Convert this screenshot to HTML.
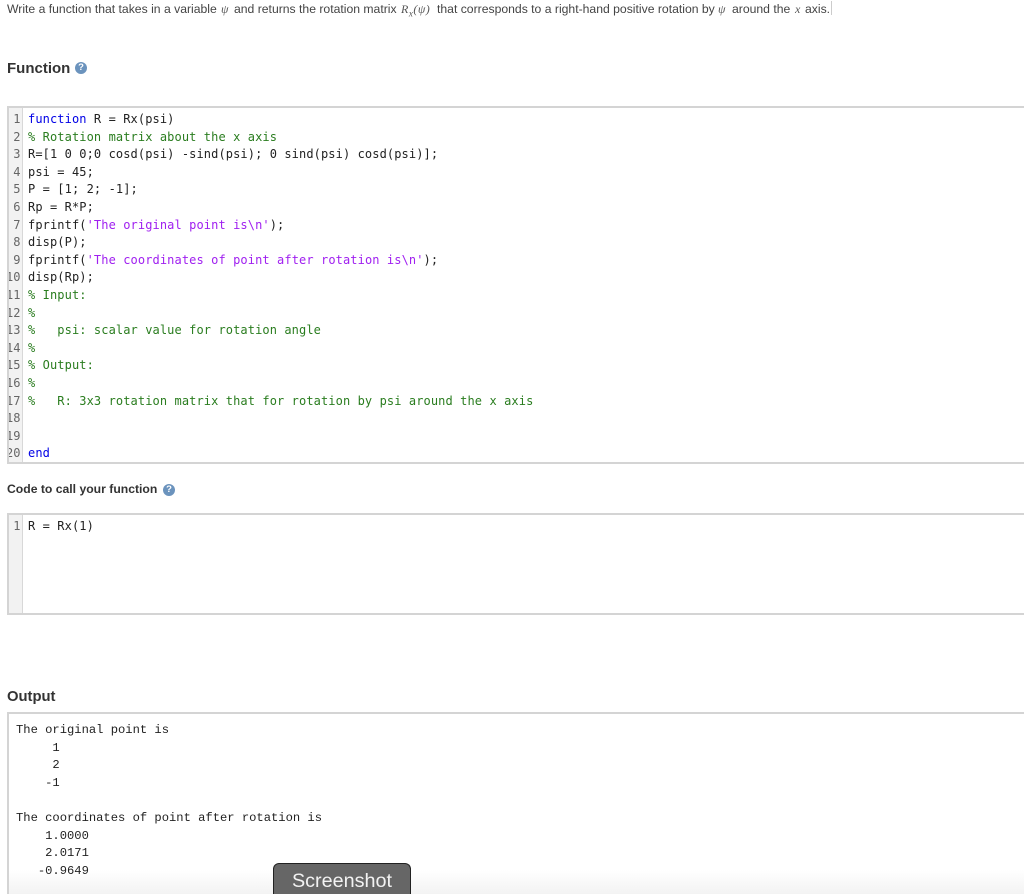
<!DOCTYPE html>
<html>
<head>
<meta charset="utf-8">
<style>
html,body{margin:0;padding:0;background:#fff;overflow:hidden;width:1024px;height:894px}
#p{width:1024px;height:894px;position:relative;overflow:hidden;font-family:"Liberation Sans",sans-serif;color:#333}
.a{position:absolute;white-space:pre}
.t{font-size:12.2px;line-height:16px;color:#444;top:1px}
.m{font-family:"Liberation Serif",serif;font-style:italic;font-size:12px;color:#555;top:1px;line-height:16px}
.h{font-weight:bold;color:#333}
.box{position:absolute;box-sizing:border-box;border:2px solid #d4d4d4;border-right:none;background:#fff}
.gut{position:absolute;left:0;top:0;bottom:0;width:13px;background:#f2f2f2;border-right:1px solid #d8d8d8}
.ln{position:absolute;left:-60px;width:80.5px;text-align:right;font:12px/17.6px "DejaVu Sans Mono",monospace;color:#666;height:17.6px;overflow:hidden}
.cl{clip-path:inset(0 0 0 69px)}
.c{position:absolute;left:28px;font:12px/17.6px "DejaVu Sans Mono",monospace;color:#222;white-space:pre;letter-spacing:.1px}
.k{color:#0000e6}.g{color:#2a7d1f}.s{color:#a020f0}
.o{position:absolute;font:12.15px/17.6px "Liberation Mono",monospace;color:#222;white-space:pre}
.q{position:absolute;width:12px;height:12px;border-radius:50%;background:#6b93bd;color:#fff;font:bold 9.5px/12px "Liberation Sans",sans-serif;text-align:center}
</style>
</head>
<body>
<div id="p">
<div class="a t" style="left:7px">Write a function that takes in a variable</div>
<div class="a m" style="left:221px">ψ</div>
<div class="a t" style="left:234px">and returns the rotation matrix</div>
<div class="a m" style="left:401px;letter-spacing:.5px">R<sub style="font-size:9px;line-height:0">x</sub>(ψ)</div>
<div class="a t" style="left:437px">that corresponds to a right-hand positive rotation by</div>
<div class="a m" style="left:718px">ψ</div>
<div class="a t" style="left:732px">around the</div>
<div class="a m" style="left:795px">x</div>
<div class="a t" style="left:805px">axis.</div>
<div class="a" style="left:831px;top:1px;width:1px;height:14px;background:#ccc"></div>

<div class="a h" style="left:7px;top:60px;font-size:15px;line-height:18px">Function</div>
<div class="q" style="left:75px;top:62px">?</div>

<div class="box" style="left:7px;top:106px;width:1017px;height:358px">
<div class="gut"></div>
</div>
<div class="ln" style="top:111px">1</div>
<div class="ln" style="top:128.6px">2</div>
<div class="ln" style="top:146.2px">3</div>
<div class="ln" style="top:163.8px">4</div>
<div class="ln" style="top:181.4px">5</div>
<div class="ln" style="top:199px">6</div>
<div class="ln" style="top:216.6px">7</div>
<div class="ln" style="top:234.2px">8</div>
<div class="ln" style="top:251.8px">9</div>
<div class="ln cl" style="top:269.4px">10</div>
<div class="ln cl" style="top:287px">11</div>
<div class="ln cl" style="top:304.6px">12</div>
<div class="ln cl" style="top:322.2px">13</div>
<div class="ln cl" style="top:339.8px">14</div>
<div class="ln cl" style="top:357.4px">15</div>
<div class="ln cl" style="top:375px">16</div>
<div class="ln cl" style="top:392.6px">17</div>
<div class="ln cl" style="top:410.2px">18</div>
<div class="ln cl" style="top:427.8px">19</div>
<div class="ln cl" style="top:445.4px">20</div>

<div class="c" style="top:111px"><span class="k">function</span> R = Rx(psi)</div>
<div class="c g" style="top:128.6px">% Rotation matrix about the x axis</div>
<div class="c" style="top:146.2px">R=[1 0 0;0 cosd(psi) -sind(psi); 0 sind(psi) cosd(psi)];</div>
<div class="c" style="top:163.8px">psi = 45;</div>
<div class="c" style="top:181.4px">P = [1; 2; -1];</div>
<div class="c" style="top:199px">Rp = R*P;</div>
<div class="c" style="top:216.6px">fprintf(<span class="s">'The original point is\n'</span>);</div>
<div class="c" style="top:234.2px">disp(P);</div>
<div class="c" style="top:251.8px">fprintf(<span class="s">'The coordinates of point after rotation is\n'</span>);</div>
<div class="c" style="top:269.4px">disp(Rp);</div>
<div class="c g" style="top:287px">% Input:</div>
<div class="c g" style="top:304.6px">%</div>
<div class="c g" style="top:322.2px">%   psi: scalar value for rotation angle</div>
<div class="c g" style="top:339.8px">%</div>
<div class="c g" style="top:357.4px">% Output:</div>
<div class="c g" style="top:375px">%</div>
<div class="c g" style="top:392.6px">%   R: 3x3 rotation matrix that for rotation by psi around the x axis</div>
<div class="c k" style="top:445.4px">end</div>

<div class="a h" style="left:7px;top:481px;font-size:12.2px;line-height:16px">Code to call your function</div>
<div class="q" style="left:163px;top:484px">?</div>

<div class="box" style="left:7px;top:513px;width:1017px;height:102px">
<div class="gut"></div>
</div>
<div class="ln" style="top:518px">1</div>
<div class="c" style="top:518px">R = Rx(1)</div>

<div class="a h" style="left:7px;top:688px;font-size:14.8px;line-height:18px">Output</div>

<div class="box" style="left:7px;top:712px;width:1017px;height:182px;border-bottom:none"></div>
<div class="a" style="left:9px;top:870px;width:1015px;height:24px;background:linear-gradient(#fff,#f3f3f3)"></div>
<div class="o" style="left:16px;top:722px">The original point is</div>
<div class="o" style="left:16px;top:739.6px">     1</div>
<div class="o" style="left:16px;top:757.2px">     2</div>
<div class="o" style="left:16px;top:774.8px">    -1</div>
<div class="o" style="left:16px;top:810px">The coordinates of point after rotation is</div>
<div class="o" style="left:16px;top:827.6px">    1.0000</div>
<div class="o" style="left:16px;top:845.2px">    2.0171</div>
<div class="o" style="left:16px;top:862.8px">   -0.9649</div>

<div class="a" style="left:273px;top:863px;width:138px;height:31px;box-sizing:border-box;background:#666;border:1px solid #222;border-bottom:none;border-radius:6px 6px 0 0;color:#f2f2f2;font-size:19.8px;line-height:35px;text-align:center">Screenshot</div>
</div>
</body>
</html>
